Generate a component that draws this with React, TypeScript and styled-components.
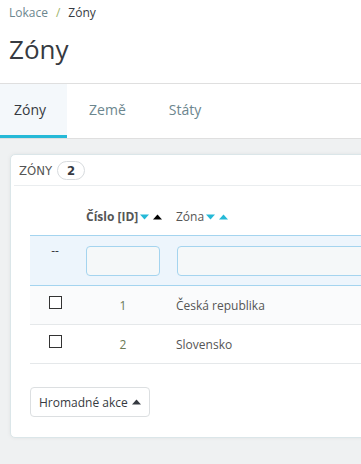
import React from 'react';
import styled, { createGlobalStyle } from 'styled-components';

const GlobalStyle = createGlobalStyle`
  html, body {
    margin: 0;
    padding: 0;
    background: #eff1f2;
    overflow: hidden;
  }
  body {
    font-family: "Open Sans", "Noto Sans", sans-serif;
    color: #363a41;
  }
  * { box-sizing: border-box; }
`;

const Page = styled.div`
  width: 361px;
  height: 464px;
  overflow: hidden;
  background: #eff1f2;
`;

const Header = styled.div`
  background: #fff;
  border-bottom: 1px solid #dfdfdf;
  padding: 4px 9px 0;
  height: 84px;
`;

const Breadcrumb = styled.div`
  font-size: 12px;
  line-height: 18px;
  color: #6c868e;
  display: flex;
  gap: 8px;
`;

const Crumb = styled.span<{ current?: boolean }>`
  color: ${p => (p.current ? '#363a41' : '#6c868e')};
`;

const Sep = styled.span`
  color: #9db36a;
`;

const Title = styled.h1`
  margin: 11px 0 0;
  font-size: 26px;
  font-weight: 400;
  line-height: 32px;
  color: #363a41;
`;

const Tabs = styled.div`
  display: flex;
  gap: 8px;
  background: #fff;
  border-bottom: 1px solid #dfdfdf;
  height: 55px;
`;

const Tab = styled.div<{ active?: boolean }>`
  display: flex;
  align-items: center;
  padding: 0 21px 0 14px;
  font-size: 14px;
  color: ${p => (p.active ? '#363a41' : '#6c868e')};
  background: ${p => (p.active ? '#f4f8fb' : '#fff')};
  border-bottom: 3px solid ${p => (p.active ? '#25b9d7' : 'transparent')};
`;

const Content = styled.div`
  padding: 15px 0 0 10px;
`;

const Panel = styled.div`
  width: 520px;
  background: #fff;
  border: 1px solid #dbe6e9;
  border-radius: 5px;
  box-shadow: 0 0 4px 0 rgba(0, 0, 0, 0.06);
  padding: 0 0 20px 3px;
`;

const PanelHeading = styled.div`
  display: flex;
  align-items: center;
  gap: 5px;
  height: 31px;
  padding-left: 5px;
  border-bottom: 1px solid #eaedef;
  font-family: "DejaVu Sans Condensed", "DejaVu Sans", sans-serif;
  font-stretch: condensed;
  font-size: 13px;
  text-transform: uppercase;
  color: #555;
`;

const Badge = styled.span`
  display: inline-flex;
  align-items: center;
  justify-content: center;
  width: 28px;
  height: 19px;
  border: 1px solid #d7dbde;
  border-radius: 10px;
  font-family: "DejaVu Sans Condensed", "DejaVu Sans", sans-serif;
  font-stretch: condensed;
  font-weight: 700;
  font-size: 13px;
  color: #363a41;
`;

const TableWrap = styled.div`
  margin: 12px 0 0 16px;
`;

const Row = styled.div<{ kind?: 'head' | 'filter' | 'odd' | 'even' }>`
  display: grid;
  grid-template-columns: 56px 90px 1fr;
  align-items: center;
  height: ${p => (p.kind === 'head' ? '37px' : p.kind === 'filter' ? '51px' : '39px')};
  font-size: 12px;
  color: #555;
  background: ${p =>
    p.kind === 'filter' ? '#edf5fc' : p.kind === 'odd' ? '#fafbfc' : '#fff'};
  border-top: ${p => (p.kind === 'filter' ? '1px solid #a4d4ef' : 'none')};
  border-bottom: ${p =>
    p.kind === 'filter'
      ? '1px solid #a4d4ef'
      : p.kind === 'head'
      ? 'none'
      : '1px solid #e5e8ea'};
`;

const CenterCell = styled.div<{ top?: boolean }>`
  display: flex;
  justify-content: center;
  padding-right: 6px;
  align-self: ${p => (p.top ? 'start' : 'center')};
  padding-top: ${p => (p.top ? '7px' : '0')};
`;

const IdCell = styled.div`
  width: 74px;
  text-align: center;
  color: #6b7a55;
`;

const HeadCell = styled.div<{ bold?: boolean }>`
  display: flex;
  align-items: center;
  font-weight: ${p => (p.bold ? 700 : 400)};
  color: #555;
  font-size: 12px;
`;

const SortIcons = styled.span`
  display: inline-flex;
  align-items: center;
  gap: 4px;
  margin-left: 2px;
`;

const FilterInput = styled.input<{ wide?: boolean }>`
  width: ${p => (p.wide ? '300px' : '74px')};
  height: 30px;
  margin-left: ${p => (p.wide ? '1px' : '0')};
  border: 1px solid #a4d4ef;
  border-radius: 4px;
  background: #f5f8f9;
  outline: none;
`;

const Dash = styled.span`
  font-size: 12px;
  line-height: 16px;
  color: #363a41;
`;

const Check = styled.span`
  display: block;
  width: 13px;
  height: 13px;
  border: 1.5px solid #333;
  background: #fff;
  margin-top: -6px;
`;

const Footer = styled.div`
  margin: 23px 0 0 16px;
`;

const BulkButton = styled.button`
  display: inline-flex;
  align-items: center;
  gap: 4px;
  height: 30px;
  padding: 0 8px;
  background: #fff;
  border: 1px solid #dcdfe1;
  border-radius: 4px;
  font-family: "Open Sans", sans-serif;
  font-size: 12px;
  color: #363a41;
`;

const Tri = ({ dir, color }: { dir: 'up' | 'down'; color: string }) => (
  <svg width="9" height="6" viewBox="0 0 9 6">
    <path d={dir === 'down' ? 'M0 0.5h9L4.5 5.5z' : 'M0 5.5h9L4.5 0.5z'} fill={color} />
  </svg>
);

const rows = [
  { id: 1, name: 'Česká republika' },
  { id: 2, name: 'Slovensko' },
];

export default function App() {
  return (
    <Page>
      <GlobalStyle />
      <Header>
        <Breadcrumb>
          <Crumb>Lokace</Crumb>
          <Sep>/</Sep>
          <Crumb current>Zóny</Crumb>
        </Breadcrumb>
        <Title>Zóny</Title>
      </Header>
      <Tabs>
        <Tab active>Zóny</Tab>
        <Tab>Země</Tab>
        <Tab>Státy</Tab>
      </Tabs>
      <Content>
        <Panel>
          <PanelHeading>
            Zóny <Badge>2</Badge>
          </PanelHeading>
          <TableWrap>
            <Row kind="head">
              <div />
              <HeadCell bold>
                Číslo [ID]
                <SortIcons>
                  <Tri dir="down" color="#25b9d7" />
                  <Tri dir="up" color="#000" />
                </SortIcons>
              </HeadCell>
              <HeadCell>
                Zóna
                <SortIcons>
                  <Tri dir="down" color="#25b9d7" />
                  <Tri dir="up" color="#25b9d7" />
                </SortIcons>
              </HeadCell>
            </Row>
            <Row kind="filter">
              <CenterCell top>
                <Dash>--</Dash>
              </CenterCell>
              <FilterInput />
              <FilterInput wide />
            </Row>
            {rows.map((r, i) => (
              <Row key={r.id} kind={i % 2 === 0 ? 'odd' : 'even'}>
                <CenterCell>
                  <Check />
                </CenterCell>
                <IdCell>{r.id}</IdCell>
                <div>{r.name}</div>
              </Row>
            ))}
          </TableWrap>
          <Footer>
            <BulkButton>
              Hromadné akce
              <Tri dir="up" color="#363a41" />
            </BulkButton>
          </Footer>
        </Panel>
      </Content>
    </Page>
  );
}
